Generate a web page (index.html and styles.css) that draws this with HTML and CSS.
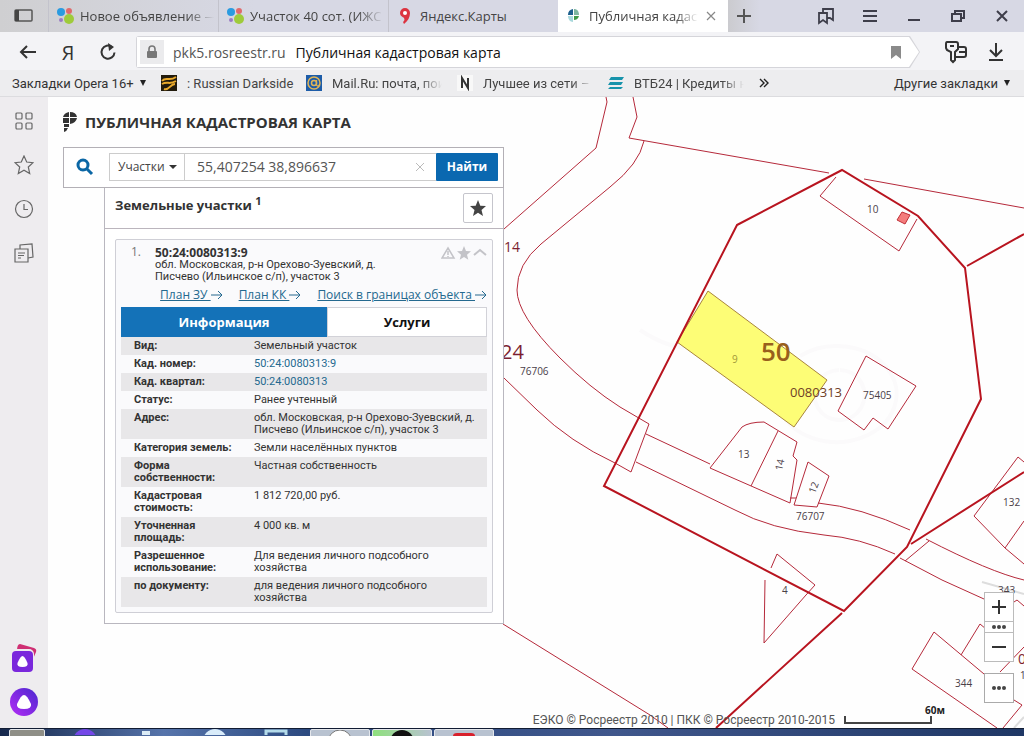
FILE: index.html
```html
<!DOCTYPE html>
<html lang="ru">

<head>
    <meta charset="UTF-8">
    <title>Публичная кадастровая карта</title>
    <link rel="stylesheet" href="styles.css">
</head>

<body>
    <header class="browser">
        <div class="tabs">
            <button class="side-toggle" aria-label="Боковая панель">
                <svg width="20" height="14" viewBox="0 0 20 14"><rect x="1" y="1" width="17" height="11" rx="1" fill="none" stroke="#555" stroke-width="1.5"/><path d="M1 1h4v11H1z" fill="#444"/></svg>
            </button>
            <button class="tab">
                <svg width="18" height="18" viewBox="0 0 18 18"><circle cx="5" cy="5" r="4" fill="#2a9be0"/><circle cx="13" cy="4" r="3" fill="#e06a6c"/><circle cx="5" cy="13" r="2" fill="#9a7cc4"/><circle cx="13" cy="12" r="5" fill="#9fcb3b"/></svg>
                <span class="tab-text fade">Новое объявление —</span>
            </button>
            <button class="tab">
                <svg width="18" height="18" viewBox="0 0 18 18"><circle cx="5" cy="5" r="4" fill="#2a9be0"/><circle cx="13" cy="4" r="3" fill="#e06a6c"/><circle cx="5" cy="13" r="2" fill="#9a7cc4"/><circle cx="13" cy="12" r="5" fill="#9fcb3b"/></svg>
                <span class="tab-text fade">Участок 40 сот. (ИЖС</span>
            </button>
            <button class="tab">
                <svg width="18" height="18" viewBox="0 0 18 18"><path d="M9 1a5 5 0 0 0-5 5c0 3 3 4 4 5 1 2 0 3-1 4l1 2c4-3 6-7 6-11a5 5 0 0 0-5-5z" fill="#dc3340"/><circle cx="9" cy="6" r="2" fill="#fff"/></svg>
                <span class="tab-text">Яндекс.Карты</span>
            </button>
            <div class="tab active">
                <svg width="18" height="18" viewBox="0 0 18 18"><path d="M8 2v6H3a6 6 0 0 1 5-6z" fill="#1d5f8d"/><path d="M9 2c3 0 5 2 5 6H9z" fill="#7db6a0"/><path d="M3 9h5v6c-3 0-5-3-5-6z" fill="#a8d8dc"/><path d="M9 9h5c-1 3-3 4-5 4z" fill="#3f9a48"/></svg>
                <span class="tab-text fade">Публичная кадастр</span>
                <button class="tab-close" aria-label="Закрыть вкладку"><svg width="10" height="10" viewBox="0 0 10 10"><path d="M1 1l8 8M9 1l-8 8" stroke="#888" stroke-width="1.2"/></svg></button>
            </div>
            <button class="tab-new" aria-label="Новая вкладка"><svg width="14" height="14" viewBox="0 0 14 14"><path d="M7 0v14M0 7h14" stroke="#555" stroke-width="2"/></svg></button>
            <div class="window-buttons">
                <button aria-label="Закладки"><svg width="18" height="18" viewBox="0 0 18 18" fill="none" stroke="#3e3e4a" stroke-width="1.8"><path d="M2 6h8v10l-4-3-4 3z"/><path d="M6 6V2h10v11l-3-2h-3"/></svg></button>
                <button aria-label="Меню"><svg width="18" height="18" viewBox="0 0 18 18"><path d="M2 4h14M2 9h14M2 14h14" stroke="#3e3e4a" stroke-width="2"/></svg></button>
                <button aria-label="Свернуть"><svg width="18" height="18" viewBox="0 0 18 18"><path d="M3 13h12" stroke="#3e3e4a" stroke-width="2"/></svg></button>
                <button aria-label="Развернуть"><svg width="18" height="18" viewBox="0 0 18 18" fill="none" stroke="#3e3e4a" stroke-width="2"><path d="M3 7h9v7H3z"/><path d="M6 7V4h9v7h-3"/></svg></button>
                <button aria-label="Закрыть"><svg width="18" height="18" viewBox="0 0 18 18"><path d="M4 4l10 10M14 4L4 14" stroke="#3e3e4a" stroke-width="2"/></svg></button>
            </div>
        </div>

        <div class="address-bar">
            <button class="nav-btn" aria-label="Назад"><svg width="18" height="18" viewBox="0 0 18 18" fill="none" stroke="#333" stroke-width="2"><path d="M17 9H2M8 3L2 9l6 6"/></svg></button>
            <button class="nav-btn ya">Я</button>
            <button class="nav-btn" aria-label="Обновить"><svg width="18" height="18" viewBox="0 0 18 18"><path d="M13 4A6.500 6.500 0 1 0 15.500 9.500" fill="none" stroke="#333" stroke-width="2"/><path d="M9 0l6 4-5 4z" fill="#333"/></svg></button>
            <div class="address-edge">
                <div class="address">
                    <span class="lock"><svg width="12" height="14" viewBox="0 0 12 14"><rect x="1" y="6" width="10" height="7" rx="1" fill="#777"/><path d="M3 7V4a3 3 0 0 1 6 0v3" fill="none" stroke="#777" stroke-width="1.6"/></svg></span>
                    <span class="host">pkk5.rosreestr.ru</span>
                    <span class="page-title">Публичная кадастровая карта</span>
                    <svg class="mark" width="10" height="13" viewBox="0 0 10 13"><path d="M0 0h10v13L5 9l-5 4z" fill="#8a8a8a"/></svg>
                </div>
            </div>
            <button class="nav-btn" aria-label="Пароли"><svg width="24" height="24" viewBox="0 0 24 24" fill="none" stroke="#333" stroke-width="2"><path d="M3 2h9q2 0 2 2v5l-3 3v8l-2 2-2-2v-8L3 10 2 8V4q0-2 1-2zM6 6h4"/><path d="M15 7h5q2 0 2 2v6q0 2-2 2h-8M15 12h7"/></svg></button>
            <button class="nav-btn" aria-label="Загрузки"><svg width="18" height="20" viewBox="0 0 18 20" fill="none" stroke="#333" stroke-width="2"><path d="M9 1v13M3 8l6 6 6-6M2 18h14"/></svg></button>
        </div>

        <nav class="bookmarks">
            <button class="mark-first">Закладки Opera 16+ <i class="caret"></i></button>
            <a class="mark-1" href="#"><svg width="16" height="16" viewBox="0 0 16 16"><path d="M0 0h16v16H0z" fill="#211a0c"/><path d="M1 6c4-5 7 1 14-4M1 9c5-3 8 1 14-3M3 14c5 2 6-5 11-5" fill="none" stroke="#e9a92b" stroke-width="2"/></svg><span>: Russian Darkside</span></a>
            <a class="mark-2" href="#"><svg width="16" height="16" viewBox="0 0 16 16"><path d="M0 0h16v16H0z" fill="#1d5ca8"/><circle cx="8" cy="8" r="6" fill="none" stroke="#e0b557" stroke-width="1.500"/><circle cx="8" cy="8" r="2.500" fill="none" stroke="#e0b557" stroke-width="1.500"/><path d="M10.500 5v5c1 2 3 1 3-1" fill="none" stroke="#e0b557" stroke-width="1.300"/></svg><span class="fade">Mail.Ru: почта, пои</span></a>
            <a class="mark-3" href="#"><svg width="16" height="16" viewBox="0 0 16 16"><path d="M0 0h16v16H0z" fill="#f8f8f8"/><path d="M5 13V3l6 10V3" fill="none" stroke="#333" stroke-width="2"/></svg><span class="fade">Лучшее из сети –</span></a>
            <a class="mark-4" href="#"><svg width="16" height="16" viewBox="0 0 16 16"><path d="M3 2h13l-2 3H1zM2 7h13l-2 3H0zM2 12h13l-2 2H0z" fill="#1793ab"/></svg><span class="fade">ВТБ24 | Кредиты н</span></a>
            <button class="more" aria-label="Ещё закладки"><svg width="10" height="10" viewBox="0 0 10 10"><path d="M1 1l4 4-4 4M5 1l4 4-4 4" fill="none" stroke="#222" stroke-width="1.400"/></svg></button>
            <button class="other">Другие закладки <i class="caret"></i></button>
        </nav>
    </header>

    <main class="content">
        <aside class="sidebar">
            <button aria-label="Табло"><svg width="20" height="20" viewBox="0 0 20 20" fill="none" stroke="#666" stroke-width="1.200"><rect x="2" y="2" width="6" height="6" rx="1"/><rect x="12" y="2" width="6" height="6" rx="1"/><rect x="2" y="12" width="6" height="6" rx="1"/><rect x="12" y="12" width="6" height="6" rx="1"/></svg></button>
            <button aria-label="Избранное"><svg width="20" height="20" viewBox="0 0 20 20"><path d="M10 1l2.700 6 6.300.700-4.700 4.300 1.400 6.500L10 15.300 4.300 18.500 5.700 12 1 7.700 7.300 7z" fill="none" stroke="#666" stroke-width="1.200"/></svg></button>
            <button aria-label="История"><svg width="20" height="20" viewBox="0 0 20 20" fill="none" stroke="#666" stroke-width="1.200"><circle cx="10" cy="10" r="8.500"/><path d="M10 5v5.500h4"/></svg></button>
            <button aria-label="Коллекции"><svg width="20" height="20" viewBox="0 0 20 20" fill="none" stroke="#666" stroke-width="1.200"><path d="M1 6h13v13H1zM4 10h7M4 12.500h6M4 15h3"/><path d="M6 6V2l12-1 1 13-5 1"/></svg></button>
            <button class="alice-cards" aria-label="Алиса: навыки"><svg width="28" height="28" viewBox="0 0 28 28"><path d="M10 0l14 4q3 1 2 4l-3 7V7H7q0-7 3-7z" fill="#cf2f73"/><rect x="1" y="5" width="23" height="23" rx="5" fill="#eeecef"/><rect x="2" y="7" width="21" height="21" rx="4" fill="#7a28dc"/><path d="M12.500 12q2 0 5 7 1 4-5 4t-5-4q3-7 5-7z" fill="#fff"/></svg></button>
            <button aria-label="Алиса"><svg width="28" height="28" viewBox="0 0 28 28"><defs><linearGradient id="alice" x1="0" y1="1" x2="1" y2="0"><stop offset="0" stop-color="#b42cf5"/><stop offset="1" stop-color="#4a28cf"/></linearGradient></defs><circle cx="14" cy="14" r="14" fill="url(#alice)"/><path d="M14 7q3 0 7 9 1 5-7 5t-7-5q4-9 7-9z" fill="#fff"/></svg></button>
        </aside>

        <div class="map">
            <svg class="map-canvas" viewBox="48 97 976 631" preserveAspectRatio="xMaxYMin slice">
                <g class="watermark">
                    <path d="M780 410a60 48 0 1 0 20-54M640 330q60 40 100-10M840 370a25 25 0 1 1-1 0"/>
                </g>
                <path class="selected" d="M708 291L827 380 794 427 677 342z"/>
                <g class="parcels">
                    <path d="M606 97l1 5-11 46L504 229M633 97l4 20-8 21 200 35M864 179l160 29"/>
                    <path d="M644 141Q639 164 610 187L541 244Q517 264 517 290Q517 315 560 358Q590 388 620 407L649 424 631 472 615 463Q570 442 537 410L504 378"/>
                    <path d="M503 624L650 715 668 728"/>
                    <path d="M646 434L710 464M636 462L735 510Q770 529 824 535Q860 538 895 554M900 558L942 580 984 599M818 503Q860 507 910 530M926 539Q990 572 1024 580M929 541L905 561"/>
                    <path d="M710 468L742 427Q749 422 764 422L797 442 793 456 797 460 790 503zM778 431L751 486M790 498h6"/>
                    <path d="M794 505L808 462 829 476 817 507z"/>
                    <path d="M836 177L820 196 899 251 917 219"/>
                    <path d="M866 356L916 386 888 429 873 418 864 430 838 411z"/>
                    <path d="M771 568L777 554 815 585 806 595 764 643 765 580"/>
                    <path d="M1024 462L1018 457 974 516 1005 548 1024 564M1005 548L1024 521"/>
                    <path d="M984 674L934 632 912 669 997 728M961 655L980 624 986 629M1000 672L1024 647M1014 700L1022 705 1003 728M1014 602L1017 600 1024 606"/>
                </g>
                <path class="building" d="M902 212L910 215 905 224 897 220z"/>
                <path d="M982 582L1024 594M1014 728L1024 717" stroke="#ddd" stroke-width="2"/>
                <g class="quarters">
                    <path d="M737 225L842 170 918 216 965 268 981 399 907 547 844 611 604 486z"/>
                    <path d="M967 266L1024 234M911 544L1024 472M842 613L716 728"/>
                </g>
                <g class="map-labels">
                    <text x="504" y="252" class="wine">14</text>
                    <text x="501" y="359" class="wine big">24</text>
                    <text x="520" y="375">76706</text>
                    <text x="732" y="363" class="pale">9</text>
                    <text x="761" y="361" class="region">50</text>
                    <text x="790" y="397" class="quarter">0080313</text>
                    <text x="863" y="399">75405</text>
                    <text x="867" y="213">10</text>
                    <text x="738" y="458">13</text>
                    <text x="0" y="0" transform="translate(782 471) rotate(-78)">14</text>
                    <text x="0" y="0" transform="translate(815 494) rotate(-70)">12</text>
                    <text x="796" y="520">76707</text>
                    <text x="782" y="594">4</text>
                    <text x="1003" y="506">132</text>
                    <text x="998" y="594">343</text>
                    <text x="955" y="687">344</text>
                    <text x="1018" y="664" class="wine">0</text>
                    <text x="1020" y="679">1</text>
                </g>
            </svg>

            <div class="panel">
                <h1 class="logo">
                    <svg width="14" height="20" viewBox="0 0 14 20"><path d="M6 0v5H0q1-4 6-5zM7 0q6 0 7 5H7zM0 6h6v5H0zM7 6h7q-1 5-7 6zM1 12h5v3H1zM1 16h4q-1 3-4 4z" fill="#333"/></svg>
                    Публичная кадастровая карта
                </h1>
                <form class="search">
                    <svg class="search-icon" width="18" height="18" viewBox="0 0 18 18"><circle cx="7" cy="7" r="5" fill="none" stroke="#0b67a5" stroke-width="3"/><path d="M11 11l5 5" stroke="#0b67a5" stroke-width="3"/></svg>
                    <div class="select-box">
                        <select class="search-type" aria-label="Тип объекта">
                            <option>Участки</option>
                        </select>
                    </div>
                    <input class="search-text" type="text" value="55,407254 38,896637" aria-label="Поиск">
                    <button class="search-clear" type="reset" aria-label="Очистить"><svg width="8" height="8" viewBox="0 0 8 8"><path d="M0 0l8 8M8 0L0 8" stroke="#bbb"/></svg></button>
                    <button class="search-go" type="button">Найти</button>
                </form>

                <section class="results">
                    <div class="results-head">
                        <h2>Земельные участки <sup>1</sup></h2>
                        <button class="star-btn" aria-label="Избранное"><svg width="18" height="18" viewBox="0 0 18 18"><path d="M9 1l2.300 5.700 5.700.400-4.500 3.900 1.500 6L9 13.700 4 17l1.500-6L1 7.100l5.700-.400z" fill="#444"/></svg></button>
                    </div>
                    <article class="card">
                        <div class="card-head">
                            <span class="num">1.</span>
                            <div class="card-title">
                                <h3>50:24:0080313:9</h3>
                                <p>обл. Московская, р-н Орехово-Зуевский, д. Писчево (Ильинское с/п), участок 3</p>
                            </div>
                            <svg class="card-icons" width="46" height="14" viewBox="0 0 46 14"><path d="M7 2l6 10H1zM7 5v4M7 10v1" fill="none" stroke="#c3c3c8" stroke-width="1.500"/><path d="M23 0l2 5 5 .3-4 3.400 1.300 5.100-4.300-2.800-4.300 2.800L20 8.700l-4-3.400 5-.3z" fill="#c3c3c8"/><path d="M33 9l6-5 6 5" fill="none" stroke="#c3c3c8" stroke-width="2"/></svg>
                        </div>
                        <div class="links">
                            <a href="#">План ЗУ <svg class="arrow" width="12" height="8" viewBox="0 0 12 8"><path d="M0 4h11M7 0l4 4-4 4"/></svg></a>
                            <a href="#">План КК <svg class="arrow" width="12" height="8" viewBox="0 0 12 8"><path d="M0 4h11M7 0l4 4-4 4"/></svg></a>
                            <a href="#">Поиск в границах объекта <svg class="arrow" width="12" height="8" viewBox="0 0 12 8"><path d="M0 4h11M7 0l4 4-4 4"/></svg></a>
                        </div>
                        <div class="card-tabs">
                            <button class="on">Информация</button>
                            <button>Услуги</button>
                        </div>
                        <table class="info">
                            <tr><th>Вид:</th><td>Земельный участок</td></tr>
                            <tr><th>Кад. номер:</th><td><a href="#">50:24:0080313:9</a></td></tr>
                            <tr><th>Кад. квартал:</th><td><a href="#">50:24:0080313</a></td></tr>
                            <tr><th>Статус:</th><td>Ранее учтенный</td></tr>
                            <tr><th>Адрес:</th><td>обл. Московская, р-н Орехово-Зуевский, д.<br>Писчево (Ильинское с/п), участок 3</td></tr>
                            <tr><th>Категория земель:</th><td>Земли населённых пунктов</td></tr>
                            <tr><th>Форма<br>собственности:</th><td>Частная собственность</td></tr>
                            <tr><th>Кадастровая<br>стоимость:</th><td>1 812 720,00 руб.</td></tr>
                            <tr><th>Уточненная<br>площадь:</th><td>4 000 кв. м</td></tr>
                            <tr><th>Разрешенное<br>использование:</th><td>Для ведения личного подсобного<br>хозяйства</td></tr>
                            <tr><th>по документу:</th><td>для ведения личного подсобного<br>хозяйства</td></tr>
                        </table>
                    </article>
                </section>
            </div>

            <div class="zoom">
                <div class="zoom-group">
                    <button class="zoom-big" aria-label="Приблизить"><svg width="14" height="14" viewBox="0 0 14 14"><path d="M7 0v14M0 7h14" stroke="#333" stroke-width="2"/></svg></button>
                    <button class="zoom-small" aria-label="Масштаб"><svg width="14" height="4" viewBox="0 0 14 4" fill="#444"><circle cx="2" cy="2" r="2"/><circle cx="7" cy="2" r="2"/><circle cx="12" cy="2" r="2"/></svg></button>
                    <button class="zoom-big" aria-label="Отдалить"><svg width="14" height="14" viewBox="0 0 14 14"><path d="M0 7h14" stroke="#333" stroke-width="2"/></svg></button>
                </div>
                <button class="zoom-more" aria-label="Ещё"><svg width="14" height="4" viewBox="0 0 14 4" fill="#444"><circle cx="2" cy="2" r="2"/><circle cx="7" cy="2" r="2"/><circle cx="12" cy="2" r="2"/></svg></button>
            </div>

            <footer class="credits">
                <span>ЕЭКО © Росреестр 2010 | ПКК © Росреестр 2010-2015</span>
                <div class="scale">60м</div>
            </footer>
        </div>
    </main>

    <div class="taskbar">
        <span class="task task-start"></span>
        <svg class="task-icons" width="240" height="6" viewBox="0 0 240 6"><circle cx="24" cy="12" r="12" fill="#7448e8"/><path d="M81 2h8v4h-8z" fill="#dcecf6"/><circle cx="154" cy="12" r="12" fill="#d9ecfa"/><path d="M205 6V2h20v4" fill="none" stroke="#b4dbea" stroke-width="3"/></svg>
        <span class="task"><svg width="30" height="6" viewBox="0 0 30 6"><circle cx="15" cy="12" r="12" fill="#fff" stroke="#777"/></svg></span>
        <span class="task green"><svg width="30" height="6" viewBox="0 0 30 6"><circle cx="15" cy="12" r="12" fill="#111"/></svg></span>
        <span class="task"><svg width="30" height="6" viewBox="0 0 30 6"><path d="M4 6q0-3 4-3h14q4 0 4 3z" fill="#d8202c"/></svg></span>
    </div>
</body>

</html>
```
FILE: styles.css
```css
* {
    box-sizing: border-box;
}

body {
    margin: 0;
    height: 100vh;
    display: flex;
    flex-direction: column;
    overflow: hidden;
    font-family: "Open Sans", "Noto Sans", sans-serif;
    font-size: 13px;
    color: #333;
    background: #fff;
}

button {
    margin: 0;
    padding: 0;
    border: 0;
    background: none;
    font: inherit;
    color: inherit;
    display: flex;
    align-items: center;
    justify-content: center;
}

svg {
    display: block;
    flex: none;
}

.fade {
    -webkit-mask-image: linear-gradient(to right, #000 80%, transparent);
    mask-image: linear-gradient(to right, #000 80%, transparent);
}

/* browser */
.tabs {
    display: flex;
    height: 32px;
    background: linear-gradient(to right, #cfcfd1, #d7d8e4 25%, #d7d8e4);
}

.side-toggle {
    width: 48px;
}

.tab {
    display: flex;
    align-items: center;
    justify-content: flex-start;
    flex: 0 1 170px;
    min-width: 0;
    gap: 6px;
    padding: 0 4px 0 7px;
    border-left: 1px solid #c3c3cc;
}

.tab-text {
    flex: 1;
    overflow: hidden;
    white-space: nowrap;
    text-align: left;
    color: #444;
}

.tab.active {
    padding-right: 10px;
    background: #fff;
    border: 0;
}

.tab-close {
    width: 14px;
    height: 14px;
}

.tab-new {
    width: 32px;
    background: linear-gradient(to right, #cbcbcf, #d7d8e4);
}

.window-buttons {
    flex: 1;
    display: flex;
    justify-content: flex-end;
    padding-right: 13px;
    gap: 26px;
}

.address-bar {
    display: flex;
    align-items: center;
    height: 38px;
    padding: 2px 16px 0 12px;
    background: #f3f3f6;
}

.nav-btn {
    width: 32px;
    height: 32px;
    margin-right: 8px;
}

.nav-btn:last-child {
    margin-right: -4px;
}

.ya {
    font-size: 20px;
}

.address-edge {
    flex: 1;
    margin: 0 20px 0 4px;
    padding: 1px;
    background: #d5d5da;
    border-radius: 3px 0 0 3px;
    clip-path: polygon(0 0, calc(100% - 10px) 0, 100% 50%, calc(100% - 10px) 100%, 0 100%);
}

.address {
    display: flex;
    align-items: center;
    height: 30px;
    padding: 0 18px 0 3px;
    background: #fff;
    font-size: 14px;
    white-space: nowrap;
    clip-path: polygon(0 0, calc(100% - 10px) 0, 100% 50%, calc(100% - 10px) 100%, 0 100%);
}

.lock {
    display: flex;
    align-items: center;
    justify-content: center;
    width: 24px;
    height: 24px;
    margin-right: 9px;
    background: #ebebed;
}

.page-title {
    flex: 1;
    margin-left: 10px;
    color: #111;
}

.host {
    color: #555;
}

.bookmarks {
    display: flex;
    align-items: center;
    height: 27px;
    padding: 0 14px 0 12px;
    background: #ededef;
    border-bottom: 1px solid #dcdcdf;
    font-family: Roboto, sans-serif;
    white-space: nowrap;
}

.bookmarks a {
    display: flex;
    align-items: center;
    gap: 10px;
    color: #444;
    text-decoration: none;
    overflow: hidden;
}

.bookmarks a span {
    flex: 1;
    overflow: hidden;
}

.mark-first {
    width: 149px;
    justify-content: flex-start;
}

.mark-1 {
    width: 145px;
}

.mark-2,
.mark-3,
.mark-4 {
    width: 151px;
    padding-right: 15px;
}

.other {
    margin-left: auto;
}

.caret {
    margin-left: 6px;
    border: 3px solid transparent;
    border-top: 6px solid #222;
    border-bottom: 0;
}

/* content */
.content {
    flex: 1;
    min-height: 0;
    display: flex;
}

.sidebar {
    width: 48px;
    display: flex;
    flex-direction: column;
    align-items: center;
    gap: 24px;
    padding: 14px 0 12px;
    background: #eeecef;
}

.alice-cards {
    margin-top: auto;
    margin-bottom: -8px;
}

.map {
    position: relative;
    flex: 1;
    min-width: 0;
    overflow: hidden;
    background: #fefefe;
}

.map-canvas {
    position: absolute;
    top: 0;
    left: 0;
    width: 100%;
    height: 100%;
}

.watermark {
    fill: none;
    stroke: #fbfafb;
    stroke-width: 4;
}

.selected {
    fill: #fdfd76;
    stroke: #a8853c;
}

.parcels {
    fill: none;
    stroke: #b5293a;
    stroke-width: 1;
}

.building {
    fill: #f47c7c;
    stroke: #c03038;
}

.quarters {
    fill: none;
    stroke: #b8141f;
    stroke-width: 2;
}

.map-labels {
    font-family: "Open Sans", sans-serif;
    font-size: 10px;
    fill: #4a4048;
}

.map-labels .wine {
    font-size: 14px;
    fill: #7c1e30;
}

.map-labels .big {
    font-size: 20px;
}

.map-labels .pale {
    fill: #a29a3a;
}

.map-labels .region {
    font-size: 26px;
    font-weight: 600;
    fill: #98601c;
}

.map-labels .quarter {
    font-size: 13px;
    fill: #704026;
}

/* search panel */
.panel {
    position: relative;
    width: 441px;
    margin-left: 15px;
}

.logo {
    display: flex;
    align-items: center;
    gap: 8px;
    height: 50px;
    margin: 0;
    font-size: 15px;
    font-weight: 700;
    text-transform: uppercase;
    white-space: nowrap;
}

.search {
    display: flex;
    align-items: center;
    height: 41px;
    padding: 0 5px 2px 12px;
    border: 1px solid #b3b0b6;
    background: #fff;
}

.select-box {
    position: relative;
    margin-left: 15px;
}

.select-box::after {
    content: "";
    position: absolute;
    right: 8px;
    top: 12px;
    border: 4px solid transparent;
    border-top-color: #333;
    pointer-events: none;
}

.search-type {
    appearance: none;
    width: 76px;
    height: 28px;
    padding: 0 8px;
    border: 1px solid #ccc;
    border-radius: 0;
    background: #fff;
    font: inherit;
    font-size: 12px;
    color: #444;
}

.search-text {
    flex: 1;
    min-width: 0;
    height: 28px;
    padding: 0 12px;
    border: 1px solid #ccc;
    border-width: 1px 0;
    background: #fff;
    font: inherit;
    font-size: 14px;
    color: #555;
}

.search-clear {
    width: 32px;
    height: 28px;
    border: 1px solid #ccc;
    border-width: 1px 0;
}

.search-go {
    width: 62px;
    height: 28px;
    border-radius: 1px;
    background: #0a68b0;
    color: #fff;
    font-size: 12px;
    font-weight: 700;
}

.results {
    margin-left: 41px;
    padding-bottom: 10px;
    border: 1px solid #b9b7bf;
    border-top: 0;
    background: #fff;
}

.results-head {
    display: flex;
    align-items: center;
    justify-content: space-between;
    height: 41px;
    padding: 0 10px;
    border-bottom: 1px solid #bbb5bd;
}

.results-head h2 {
    margin: 0;
    padding-bottom: 6px;
    font-size: 13px;
    font-weight: 700;
}

.results-head sup {
    font-size: 11px;
    line-height: 1;
}

.star-btn {
    width: 30px;
    height: 30px;
    border: 1px solid #c5c5cc;
    border-radius: 2px;
}

.card {
    margin: 10px 10px 0;
    padding: 6px 5px 5px;
    border: 1px solid #cfcfd6;
    border-radius: 2px;
    background: #fafafc;
    font-size: 11px;
    line-height: 12px;
}

.card-head {
    display: flex;
    padding-left: 10px;
}

.num {
    width: 24px;
    font-size: 12px;
    color: #777;
}

.card-title {
    flex: 1;
}

.card-title h3 {
    margin: 0;
    font-size: 12px;
    line-height: 13px;
    font-weight: 700;
}

.card-title p {
    margin: 0;
    width: 240px;
    font-family: Roboto, sans-serif;
}

.links {
    display: flex;
    justify-content: flex-end;
    gap: 16px;
    padding: 5px 0;
    font-size: 12px;
    line-height: 14px;
}

.links a,
.info a {
    color: #24698f;
}

.arrow {
    display: inline-block;
    fill: none;
    stroke: #24698f;
}

.card-tabs {
    display: flex;
    height: 30px;
    font-size: 13px;
    font-weight: 700;
}

.card-tabs button {
    flex: 0 0 160px;
    border: 1px solid #d2d2d8;
    background: #fff;
    color: #111;
}

.card-tabs .on {
    flex: 1;
    border: 0;
    background: #1472b8;
    color: #fff;
}

.info {
    width: 100%;
    border-collapse: collapse;
    font-family: Roboto, sans-serif;
}

.info tr:nth-child(odd) {
    background: #e8e7e9;
}

.info th,
.info td {
    padding: 3px 0;
    text-align: left;
    vertical-align: top;
}

.info th {
    width: 133px;
    padding-left: 13px;
    font-weight: 700;
    white-space: nowrap;
}

.info a {
    text-decoration: none;
}

/* map controls */
.zoom {
    position: absolute;
    right: 10px;
    bottom: 25px;
}

.zoom-group {
    border: 1px solid #bbb;
    background: #fff;
}

.zoom button {
    width: 28px;
    background: #fff;
}

.zoom .zoom-big {
    height: 28px;
}

.zoom .zoom-small {
    height: 12px;
    border: 1px solid #bbb;
    border-width: 1px 0;
}

.zoom .zoom-more {
    width: 30px;
    height: 30px;
    margin-top: 11px;
    border: 1px solid #aaa;
}

.credits {
    position: absolute;
    right: 92px;
    bottom: 0;
    display: flex;
    align-items: flex-end;
    gap: 9px;
    font-family: Roboto, sans-serif;
    font-size: 12px;
    line-height: 15px;
    color: #555;
}

.scale {
    width: 88px;
    margin-bottom: 4px;
    margin-right: -13px;
    padding-right: 0;
    font-family: "Open Sans", sans-serif;
    font-size: 10px;
    line-height: 12px;
    font-weight: 700;
    color: #222;
    text-align: right;
}

.scale::after {
    content: "";
    display: block;
    height: 6px;
    margin-right: 13px;
    border: 2px solid #444;
    border-top: 0;
}

.scale {
    width: 101px;
}

/* taskbar */
.taskbar {
    display: flex;
    height: 8px;
    padding-left: 9px;
    overflow: hidden;
    border-top: 1px solid #111c33;
    background: linear-gradient(to right, #16284c, #5674ab 16%, #2c4a80 30%, #40578c 60%, #1f3765);
}

.task {
    display: flex;
    justify-content: center;
    width: 60px;
    height: 12px;
    margin-right: 2px;
    border: 1px solid #e4e7ec;
    border-radius: 2px;
    background: #b8c2d0;
}

.task-start {
    width: 36px;
    margin-right: 16px;
    background: #8f8f87;
}

.task-icons {
    margin-right: 9px;
}

.green {
    background: linear-gradient(to right, #8fe07e, #b8c2d0);
}
```
